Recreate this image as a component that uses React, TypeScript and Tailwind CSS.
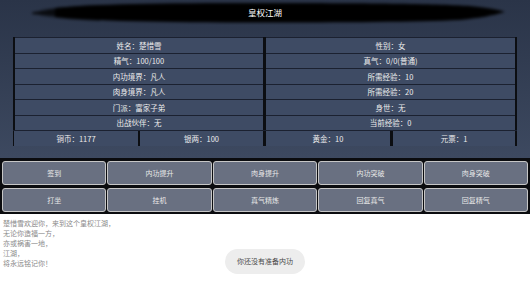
import React from "react";

const rows = [
  ["姓名：楚惜雪", "性别：女"],
  ["精气：100/100", "真气：0/0(普通)"],
  ["内功境界：凡人", "所需经验：10"],
  ["肉身境界：凡人", "所需经验：20"],
  ["门派：富家子弟", "身世：无"],
  ["出战伙伴：无", "当前经验：0"],
];

const buttons = [
  "签到",
  "内功提升",
  "肉身提升",
  "内功突破",
  "肉身突破",
  "打坐",
  "挂机",
  "真气精炼",
  "回复真气",
  "回复精气",
];

const lines = [
  "楚惜雪欢迎你，来到这个皇权江湖，",
  "无论你造福一方，",
  "亦或祸害一地，",
  "江湖，",
  "将永远铭记你！",
];

function Cell({ text }: { text: string }) {
  return (
    <div className="flex h-[14.5px] items-center justify-center bg-[#3e4b64] text-[7.5px] leading-none text-[#ececec]">
      {text}
    </div>
  );
}

function Brush() {
  return (
    <svg className="absolute inset-0" width="530" height="25" viewBox="0 0 530 25">
      <defs>
        <filter id="blur" x="-10%" y="-50%" width="120%" height="200%">
          <feGaussianBlur stdDeviation="1.4" />
        </filter>
      </defs>
      <g filter="url(#blur)" fill="#000">
        <path d="M55 8 C 90 4, 160 3, 260 3 C 380 3, 440 4, 470 6 C 490 8, 500 10, 505 12 C 495 15, 480 18, 460 20 C 420 22, 340 22.5, 260 22.5 C 160 22.5, 90 21, 55 17 Z" />
        <path d="M32 12.5 C 50 9, 80 7, 110 6.5 L 110 18 C 80 17.5, 50 16, 32 14 Z" opacity="0.8" />
        <path d="M40 10 C 60 7, 85 5.5, 100 5 L 100 8 C 80 8.5, 60 9.5, 40 10.5 Z" opacity="0.6" />
        <path d="M40 15.5 C 60 17, 85 18.5, 100 19 L 100 21 C 80 20.5, 60 18.5, 40 16 Z" opacity="0.5" />
      </g>
    </svg>
  );
}

export default function App() {
  return (
    <div
      className="relative h-[286px] w-[530px] overflow-hidden bg-white"
      style={{ fontFamily: '"Noto Sans CJK SC", "Noto Sans", sans-serif' }}
    >
      {/* top panel */}
      <div className="h-[158px] bg-linear-to-b from-[#2a3448] to-[#3d4960] px-[13px]">
        <div className="relative -mx-[13px] flex h-[25px] items-center justify-center">
          <Brush />
          <span className="relative text-[8.5px] leading-none text-white">皇权江湖</span>
        </div>

        <div className="mt-[12px] flex gap-[3px] bg-[#0c0e12] px-[2px]">
          <div className="flex w-[248px] flex-col gap-px border-t border-[#1b2130] bg-[#1b2130]">
            {rows.map((r) => (
              <Cell key={r[0]} text={r[0]} />
            ))}
          </div>
          <div className="flex flex-1 flex-col gap-px border-t border-[#1b2130] bg-[#1b2130]">
            {rows.map((r) => (
              <Cell key={r[1]} text={r[1]} />
            ))}
          </div>
        </div>

        <div className="flex border-t border-[#1b2130] bg-[#0c0e12] pl-px pr-[2px]">
          <div className="w-[124px]">
            <Cell text="铜币：1177" />
          </div>
          <div className="ml-[2px] w-[123px]">
            <Cell text="银两：100" />
          </div>
          <div className="ml-[3px] w-[124px]">
            <Cell text="黄金：10" />
          </div>
          <div className="ml-[3px] flex-1">
            <Cell text="元票：1" />
          </div>
        </div>
      </div>

      {/* action buttons */}
      <div className="grid grid-cols-5 gap-x-px gap-y-[3px] bg-[#0b0c0f] px-[2px] pb-[2px] pt-[3px]">
        {buttons.map((b) => (
          <div
            key={b}
            className="flex h-[24px] items-center justify-center rounded-[3px] border border-[#c6c6c6] bg-[#697081] text-[7px] leading-none text-[#e8e8e8]"
          >
            {b}
          </div>
        ))}
      </div>

      {/* welcome text */}
      <div className="pl-[3px] pt-[4px] text-[7px] leading-[10px] text-[#8a8a8a]">
        {lines.map((l) => (
          <div key={l}>{l}</div>
        ))}
      </div>

      {/* toast */}
      <div className="absolute left-[225px] top-[249px] flex h-[25px] w-[80px] items-center justify-center rounded-full bg-[#ededed] text-[7px] leading-none text-[#4a4a4a]">
        你还没有准备内功
      </div>
    </div>
  );
}
